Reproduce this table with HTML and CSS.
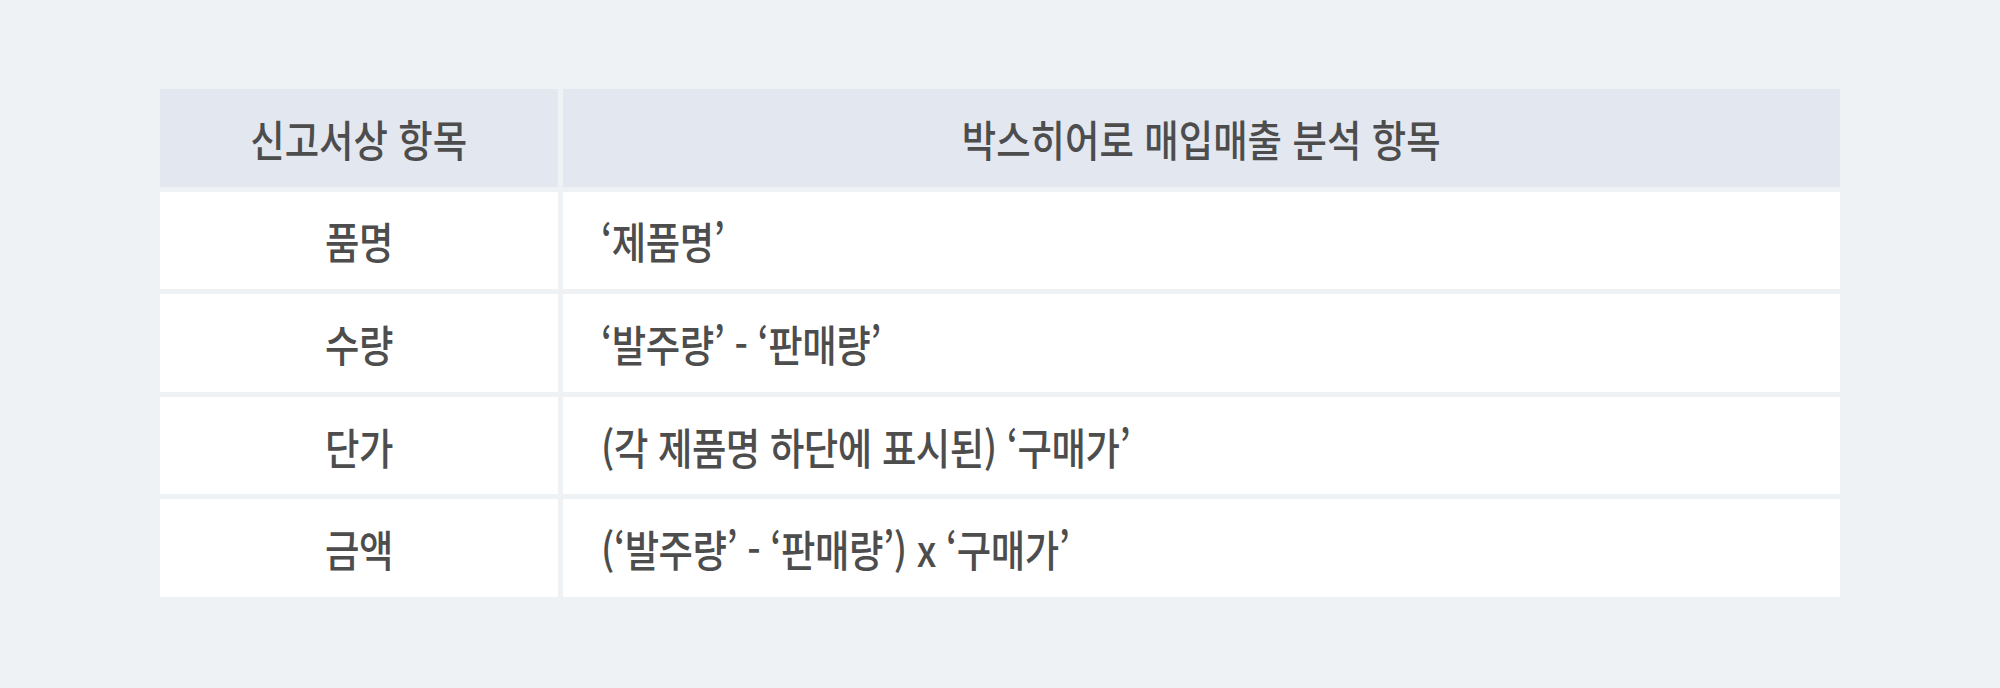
FILE: index.html
```html
<!DOCTYPE html>
<html lang="ko">
<head>
<meta charset="utf-8">
<link rel="stylesheet" href="styles.css">
</head>
<body>
<div class="page">
  <div class="table">
    <div class="cell head"><span class="txt">신고서상 항목</span></div>
    <div class="cell head"><span class="txt">박스히어로 매입매출 분석 항목</span></div>

    <div class="cell key"><span class="txt">품명</span></div>
    <div class="cell val"><span class="txt">‘제품명’</span></div>

    <div class="cell key"><span class="txt">수량</span></div>
    <div class="cell val"><span class="txt">‘발주량’ - ‘판매량’</span></div>

    <div class="cell key"><span class="txt">단가</span></div>
    <div class="cell val"><span class="txt">(각 제품명 하단에 표시된) ‘구매가’</span></div>

    <div class="cell key"><span class="txt">금액</span></div>
    <div class="cell val"><span class="txt">(‘발주량’ - ‘판매량’) x ‘구매가’</span></div>
  </div>
</div>
</body>
</html>
```
FILE: styles.css
```css
html, body {
  margin: 0;
  padding: 0;
  background: #eef2f5;
}
.page {
  width: 2000px;
  height: 688px;
  padding: 89px 0 0 160px;
  box-sizing: border-box;
}
.table {
  display: grid;
  grid-template-columns: 398px 1277px;
  grid-auto-rows: 97.6px;
  gap: 5px;
  font-family: "Noto Sans CJK KR", "Noto Sans", sans-serif;
  font-weight: 500;
  font-size: 43px;
  color: #4d4d4d;
}
.cell {
  display: flex;
  align-items: center;
  background: #ffffff;
  overflow: hidden;
}
.head {
  background: #e3e7ef;
  justify-content: center;
}
.key {
  justify-content: center;
}
.val {
  padding-left: 38px;
}
.txt {
  white-space: nowrap;
  line-height: 1;
  letter-spacing: -0.5px;
  transform: scaleX(0.87);
  padding-top: 1px;
}
.head .txt {
  letter-spacing: 0;
}
.val .txt {
  transform-origin: left center;
}
```
